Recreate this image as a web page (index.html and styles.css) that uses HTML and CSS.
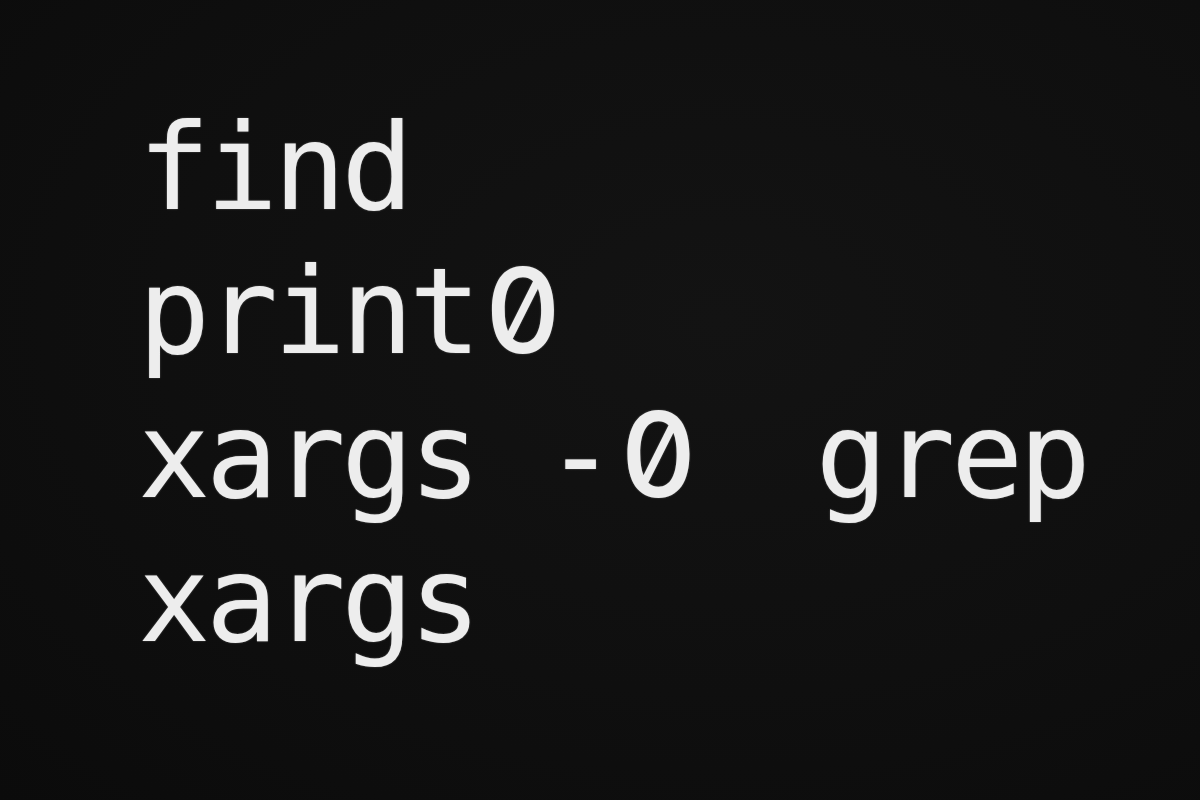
FILE: index.html
```html
<!DOCTYPE html>
<html lang="en">
<head>
<meta charset="utf-8">
<title>find print0 xargs</title>
<link rel="stylesheet" href="styles.css">
</head>
<body>
<main class="screen">
  <div class="line">find</div>
  <div class="line">print<span class="zero">0</span></div>
  <div class="line">xargs -<span class="zero">0</span>  grep</div>
  <div class="line">xargs</div>
</main>
</body>
</html>
```
FILE: styles.css
```css
html, body {
  margin: 0;
  padding: 0;
  width: 1200px;
  height: 800px;
  overflow: hidden;
}
body {
  background: #0f0f0f;
}
.screen {
  box-sizing: border-box;
  width: 1200px;
  height: 800px;
  padding: 96px 0 0 138px;
  background: radial-gradient(ellipse at 60% 40%, #131313 0%, #0f0f0f 55%, #0b0b0b 100%);
  font-family: "DejaVu Sans Mono", "Liberation Mono", monospace;
  font-size: 120px;
  letter-spacing: -4.5px;
  line-height: 144px;
  color: #ededed;
  text-shadow: 0 0 2px rgba(237, 237, 237, 0.35);
}
.line {
  height: 144px;
  white-space: pre;
}
.zero {
  display: inline-block;
  box-sizing: border-box;
  width: 67.7px;
  padding-left: 8px;
  text-align: left;
  letter-spacing: -16px;
  line-height: 1;
  vertical-align: baseline;
  font-family: "Inter", "DejaVu Sans Mono", sans-serif;
  font-weight: 500;
  font-size: 118px;
  font-feature-settings: "zero" 1, "tnum" 1;
}
```
